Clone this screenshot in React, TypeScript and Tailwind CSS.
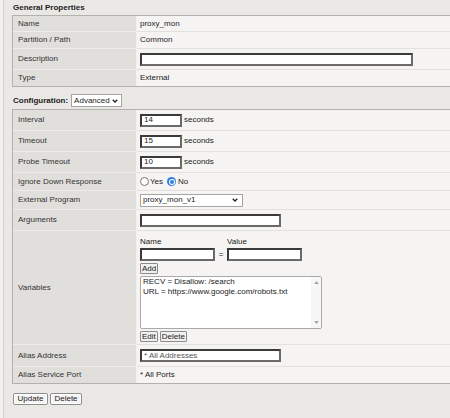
import React from "react";

function Chevron({ className }: { className?: string }) {
  return (
    <svg viewBox="0 0 8 5" className={className}>
      <path d="M1 0.8 L4 3.8 L7 0.8" fill="none" stroke="#1f1f1f" strokeWidth="1.7" />
    </svg>
  );
}

function Row({
  label,
  h,
  children,
  last = false,
}: {
  label: string;
  h: string;
  children?: React.ReactNode;
  last?: boolean;
}) {
  return (
    <div className={`flex ${h}`}>
      <div
        className={`w-[124px] shrink-0 flex items-center pl-[5px] bg-[#e1dfdb] text-[#333] border-r border-r-[#f1f0ee] ${
          last ? "" : "border-b border-b-[#eeedea]"
        }`}
      >
        {label}
      </div>
      <div
        className={`flex-1 min-w-0 flex items-center pl-[3px] bg-[#f5f4f2] text-[#222] ${
          last ? "" : "border-b border-b-[#e3e1dd]"
        }`}
      >
        {children}
      </div>
    </div>
  );
}

function TextBox({ w, value, gray = false }: { w: string; value?: string; gray?: boolean }) {
  return (
    <div
      className={`${w} h-[13px] shrink-0 bg-white border-2 border-t-[#3a3a3a] border-l-[#3a3a3a] border-r-[#6a6a6a] border-b-[#6a6a6a] flex items-center pl-[2px] leading-none ${
        gray ? "text-[#555]" : "text-[#222]"
      }`}
    >
      {value}
    </div>
  );
}

function SmallBtn({ children }: { children: React.ReactNode }) {
  return (
    <div className="h-[11px] px-[1px] flex items-center bg-[#f0f0f0] border border-[#8c8c8c] rounded-[1px] leading-none text-[#222]">
      {children}
    </div>
  );
}

function BigBtn({ children, w }: { children: React.ReactNode; w: string }) {
  return (
    <div
      className={`${w} h-[12px] flex items-center justify-center bg-[#f4f4f4] border border-[#8e8e8e] rounded-[2px] shadow-[inset_0_0_0_1px_#ffffff] leading-none text-[#222]`}
    >
      {children}
    </div>
  );
}

function Radio({ checked }: { checked?: boolean }) {
  if (checked) {
    return (
      <span className="w-[9px] h-[9px] rounded-full bg-[#2f7fe0] flex items-center justify-center shrink-0">
        <span className="w-[6px] h-[6px] rounded-full bg-white flex items-center justify-center">
          <span className="w-[4px] h-[4px] rounded-full bg-[#2f7fe0]" />
        </span>
      </span>
    );
  }
  return <span className="w-[9px] h-[9px] rounded-full bg-white border border-[#767676] shrink-0" />;
}

export default function App() {
  return (
    <div className="w-[450px] h-[418px] overflow-hidden bg-[#f2f1ef] font-['Liberation_Sans',Arial,sans-serif] text-[8px] leading-[10px]">
      <div className="ml-[3px] h-full border-l border-l-[#d3d1cd] bg-[#e9e8e5]">
        {/* General Properties */}
        <div className="h-[15px] flex items-center pl-[9px] font-bold text-[#222]">General Properties</div>
        <div className="ml-[8px] border-l border-t border-b border-[#b3b1ad]">
          <Row label="Name" h="h-[16px]">proxy_mon</Row>
          <Row label="Partition / Path" h="h-[17px]">Common</Row>
          <Row label="Description" h="h-[21px]">
            <TextBox w="w-[273px]" />
          </Row>
          <Row label="Type" h="h-[16px]" last>
            External
          </Row>
        </div>

        {/* Configuration */}
        <div className="h-[22px] flex items-end pb-[2px] pl-[9px] gap-[3px]">
          <span className="font-bold text-[#222] leading-[13px]">Configuration:</span>
          <div className="w-[51px] h-[13px] bg-white border border-[#a5a5a5] flex items-center justify-between pl-[2px] pr-[3px] leading-none text-[#222]">
            <span>Advanced</span>
            <Chevron className="w-[6px] h-[4px]" />
          </div>
        </div>
        <div className="ml-[8px] border-l border-t border-b border-[#b3b1ad]">
          <Row label="Interval" h="h-[21px]">
            <TextBox w="w-[42px]" value="14" />
            <span className="ml-[2px]">seconds</span>
          </Row>
          <Row label="Timeout" h="h-[21px]">
            <TextBox w="w-[42px]" value="15" />
            <span className="ml-[2px]">seconds</span>
          </Row>
          <Row label="Probe Timeout" h="h-[21px]">
            <TextBox w="w-[42px]" value="10" />
            <span className="ml-[2px]">seconds</span>
          </Row>
          <Row label="Ignore Down Response" h="h-[18px]">
            <div className="flex items-center">
              <Radio />
              <span className="ml-[1px]">Yes</span>
              <span className="ml-[4px]">
                <Radio checked />
              </span>
              <span className="ml-[2px]">No</span>
            </div>
          </Row>
          <Row label="External Program" h="h-[19px]">
            <div className="w-[103px] h-[13px] bg-white border border-[#a5a5a5] flex items-center justify-between pl-[2px] pr-[4px] leading-none text-[#222]">
              <span>proxy_mon_v1</span>
              <Chevron className="w-[6px] h-[4px]" />
            </div>
          </Row>
          <Row label="Arguments" h="h-[21px]">
            <TextBox w="w-[141px]" />
          </Row>
          <Row label="Variables" h="h-[114px]">
            <div className="flex flex-col items-start self-start pt-[5px]">
              <div className="flex h-[12px] items-center">
                <span className="w-[87px]">Name</span>
                <span>Value</span>
              </div>
              <div className="flex items-center">
                <TextBox w="w-[75px]" />
                <span className="w-[12px] text-center">=</span>
                <TextBox w="w-[75px]" />
              </div>
              <div className="mt-[2px]">
                <SmallBtn>Add</SmallBtn>
              </div>
              <div className="mt-[2px] w-[182px] h-[53px] bg-white border border-[#a9a9a9] rounded-[2px] flex overflow-hidden">
                <div className="flex-1 pl-[2px] leading-[10px] text-[#222]">
                  <div>RECV = Disallow: /search</div>
                  <div>URL = https://www.google.com/robots.txt</div>
                </div>
                <div className="w-[10px] bg-[#f7f7f7] flex flex-col items-center justify-between py-[4px]">
                  <svg viewBox="0 0 6 4" className="w-[5px] h-[3px]">
                    <path d="M0 4 L3 0 L6 4 Z" fill="#a3a3a3" />
                  </svg>
                  <svg viewBox="0 0 6 4" className="w-[5px] h-[3px]">
                    <path d="M0 0 L3 4 L6 0 Z" fill="#a3a3a3" />
                  </svg>
                </div>
              </div>
              <div className="mt-[2px] flex gap-[2px]">
                <SmallBtn>Edit</SmallBtn>
                <SmallBtn>Delete</SmallBtn>
              </div>
            </div>
          </Row>
          <Row label="Alias Address" h="h-[22px]">
            <TextBox w="w-[141px]" value="* All Addresses" gray />
          </Row>
          <Row label="Alias Service Port" h="h-[16px]" last>
            * All Ports
          </Row>
        </div>

        {/* Buttons */}
        <div className="mt-[9px] ml-[9px] flex gap-[2px]">
          <BigBtn w="w-[35px]">Update</BigBtn>
          <BigBtn w="w-[32px]">Delete</BigBtn>
        </div>
      </div>
    </div>
  );
}
